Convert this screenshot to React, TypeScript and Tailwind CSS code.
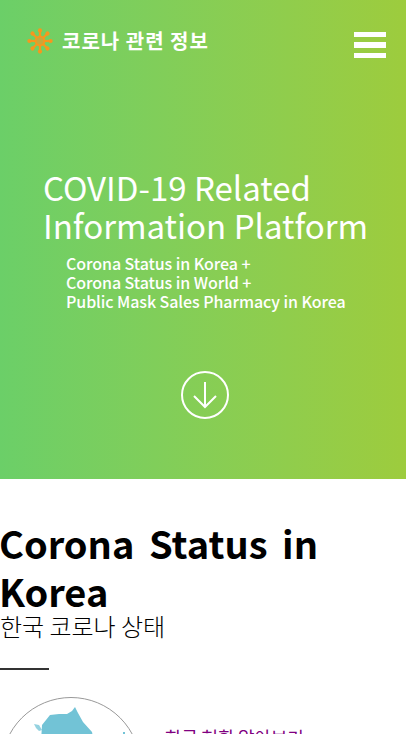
const sans = 'font-["Noto_Sans_CJK_KR","Noto_Sans",sans-serif]'

function VirusIcon() {
  const spokes = [0, 45, 90, 135, 180, 225, 270, 315]
  return (
    <svg width="26" height="26" viewBox="0 0 26 26" fill="none" className="shrink-0">
      {spokes.map((a) => (
        <g key={a} transform={`rotate(${a} 13 13)`}>
          <line x1="13" y1="13" x2="13" y2="2" stroke="#f7971e" strokeWidth="2.2" />
          <circle cx="13" cy="2.4" r="2.1" fill="#f7971e" />
        </g>
      ))}
      <circle cx="13" cy="13" r="4.4" stroke="#f7971e" strokeWidth="2" fill="#c9a83a" />
    </svg>
  )
}

function DownArrow() {
  return (
    <svg width="48" height="48" viewBox="0 0 48 48" fill="none" stroke="#fff">
      <circle cx="24" cy="24" r="23" strokeWidth="2" />
      <path d="M24 11V36" strokeWidth="2" />
      <path d="M13 25L24 36L35 25" strokeWidth="2" />
    </svg>
  )
}

function KoreaMap() {
  return (
    <svg width="140" height="140" viewBox="0 0 140 140" className="shrink-0">
      <circle cx="70" cy="70" r="69.5" fill="#fff" stroke="#999" strokeWidth="1" />
      <path
        d="M49 18 L58 17 L66 17 L71 14 L74 10 L77 16 L82 25 L91 35 L93 45 L40 45 L41 28 Z"
        fill="#72c3d6"
      />
      <path d="M33 27 L38 28 L41 33 L38 34 L35 31 Z" fill="#72c3d6" opacity="0.75" />
      <rect x="122" y="35" width="2" height="3" fill="#72c3d6" />
    </svg>
  )
}

export default function App() {
  return (
    <div className={`h-[734px] w-[406px] overflow-hidden bg-white ${sans}`}>
      <section className="h-[479px] bg-gradient-to-r from-[#6bcf68] to-[#9dcc3d] text-white">
        <header className="flex items-start justify-between pl-[27px] pr-[20px] pt-[28px]">
          <a className="flex items-center gap-[9px]">
            <VirusIcon />
            <span className="text-[20px] leading-[26px] font-bold tracking-[1px]">코로나 관련 정보</span>
          </a>
          <div className="mt-[4px] flex w-[32px] flex-col gap-[5px]">
            <div className="h-[5px] bg-white" />
            <div className="h-[6px] bg-white" />
            <div className="h-[5px] bg-white" />
          </div>
        </header>

        <div className="pl-[43px] pt-[110px]">
          <h1 className="text-[33px] leading-[38px] font-normal">
            COVID-19 Related
            <br />
            Information Platform
          </h1>
          <p className="mt-[10px] pl-[23px] text-[16px] leading-[19px] font-medium tracking-[-0.08px]">
            Corona Status in Korea +
            <br />
            Corona Status in World +
            <br />
            Public Mask Sales Pharmacy in Korea
          </p>
        </div>

        <div className="mt-[60px] flex justify-center pl-[4px]">
          <DownArrow />
        </div>
      </section>

      <section className="pt-[40px]">
        <h2 className="-ml-[1px] text-[38px] leading-[48px] font-bold text-black [word-spacing:6px]">Corona Status in Korea</h2>
        <p className="pt-[1px] text-[24px] leading-[20px] font-light text-black">한국 코로나 상태</p>
        <div className="mt-[32px] h-[2px] w-[49px] bg-[#333]" />
        <div className="mt-[27px] flex items-start gap-[24px] pl-[1px]">
          <KoreaMap />
          <a className="mt-[29px] text-[18px] leading-[22px] tracking-[-0.2px] text-[#800080] underline">한국 현황 알아보기</a>
        </div>
      </section>
    </div>
  )
}
